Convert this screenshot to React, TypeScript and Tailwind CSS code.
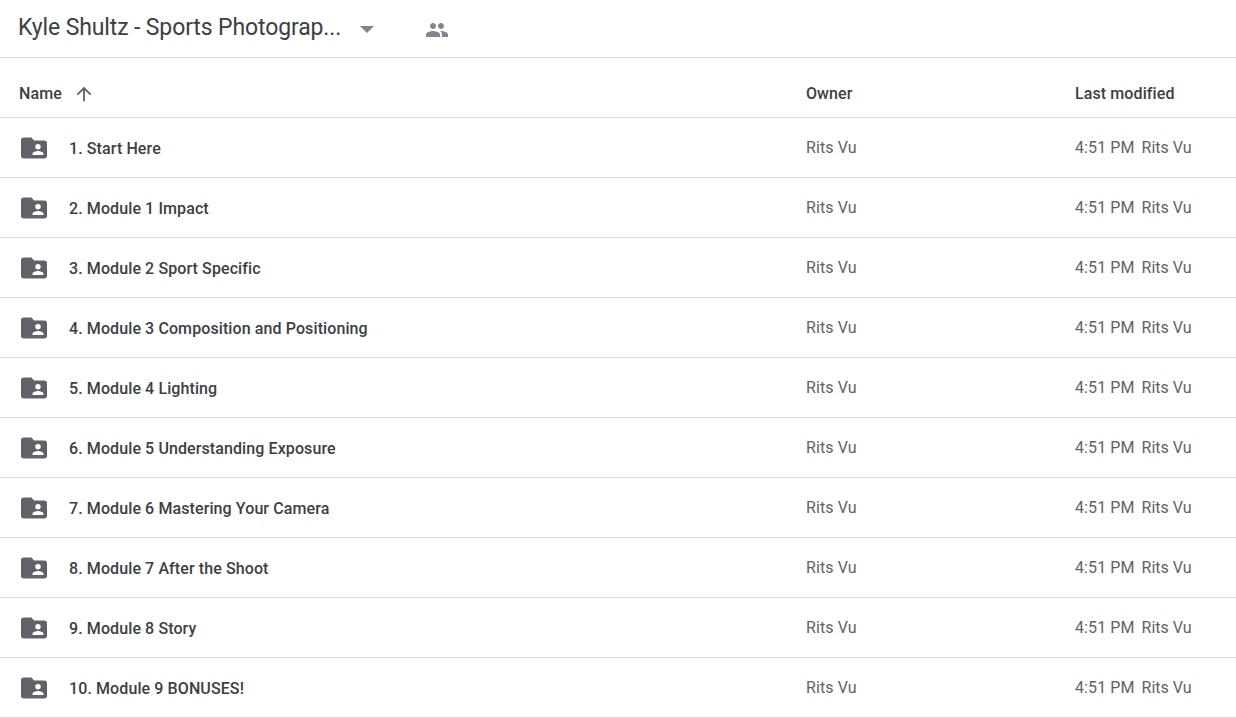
const rows = [
  '1. Start Here',
  '2. Module 1 Impact',
  '3. Module 2 Sport Specific',
  '4. Module 3 Composition and Positioning',
  '5. Module 4 Lighting',
  '6. Module 5 Understanding Exposure',
  '7. Module 6 Mastering Your Camera',
  '8. Module 7 After the Shoot',
  '9. Module 8 Story',
  '10. Module 9 BONUSES!',
];

function SharedFolder() {
  return (
    <svg width="26" height="22" viewBox="0 0 26 22" className="block">
      <path
        fill="#5f6368"
        fillRule="evenodd"
        d="M2.5 0.5h8l2.500 3h10.500c1.400 0 2.500 1.100 2.500 2.500v13c0 1.400-1.100 2.500-2.500 2.500h-21C1.100 21.500 0 20.400 0 19V3C0 1.600 1.100 0.500 2.500 0.500zM17 7a2.700 2.700 0 1 0 0 5.400 2.700 2.700 0 0 0 0-5.400zM11.500 18h11v-1.300c0-1.900-3.700-2.800-5.500-2.800s-5.500 0.900-5.500 2.800z"
      />
    </svg>
  );
}

export default function App() {
  return (
    <div className="w-[1236px] h-[718px] overflow-hidden bg-white font-['Roboto',sans-serif]">
      {/* Breadcrumb bar */}
      <div className="h-[58px] flex items-center border-b border-[#dadce0] pl-[18px]">
        <span className="w-[324px] whitespace-nowrap text-[23px] tracking-[-0.13px] leading-none text-[#3c4043] pb-[3px]">
          Kyle Shultz - Sports Photograp...
        </span>
        <svg width="14" height="7" viewBox="0 0 14 7" className="ml-[18px] mt-[2px]">
          <path d="M0 0l7 7 7-7z" fill="#80868b" />
        </svg>
        <svg width="24" height="24" viewBox="0 0 24 24" className="ml-[51px] mt-[2px]" fill="#80868b">
          <path d="M16 11c1.660 0 2.990-1.340 2.990-3S17.660 5 16 5c-1.660 0-3 1.340-3 3s1.340 3 3 3zm-8 0c1.660 0 2.990-1.340 2.990-3S9.660 5 8 5C6.340 5 5 6.340 5 8s1.340 3 3 3zm0 2c-2.330 0-7 1.170-7 3.500V19h14v-2.500c0-2.330-4.670-3.500-7-3.500zm8 0c-.290 0-.620.020-.970.050 1.160.840 1.970 1.970 1.970 3.450V19h6v-2.500c0-2.330-4.670-3.500-7-3.500z" />
        </svg>
      </div>

      {/* Column headers */}
      <div className="h-[60px] grid grid-cols-[806px_269px_1fr] items-center border-b border-[#dadce0] pt-[13px] text-base tracking-[0.1px] font-medium text-[#3c4043]">
        <div className="flex items-center pl-[19px]">
          <span>Name</span>
          <svg width="22" height="22" viewBox="0 0 24 24" fill="#5f6368" className="ml-[11px]">
            <path d="M4 12l1.410 1.410L11 7.830V20h2V7.830l5.580 5.590L20 12l-8-8-8 8z" />
          </svg>
        </div>
        <div>Owner</div>
        <div>Last modified</div>
      </div>

      {/* Folder rows */}
      {rows.map((name) => (
        <div
          key={name}
          className="h-[60px] grid grid-cols-[806px_269px_1fr] items-center border-b border-[#dadce0] text-base tracking-[0.1px] text-[#5f6368]"
        >
          <div className="flex items-center pl-[21px]">
            <SharedFolder />
            <span className="ml-[22px] pt-[2px] font-medium text-[#3c4043]">{name}</span>
          </div>
          <div>Rits Vu</div>
          <div className="flex gap-[7px]">
            <span>4:51 PM</span>
            <span className="tracking-normal">Rits Vu</span>
          </div>
        </div>
      ))}
    </div>
  );
}
